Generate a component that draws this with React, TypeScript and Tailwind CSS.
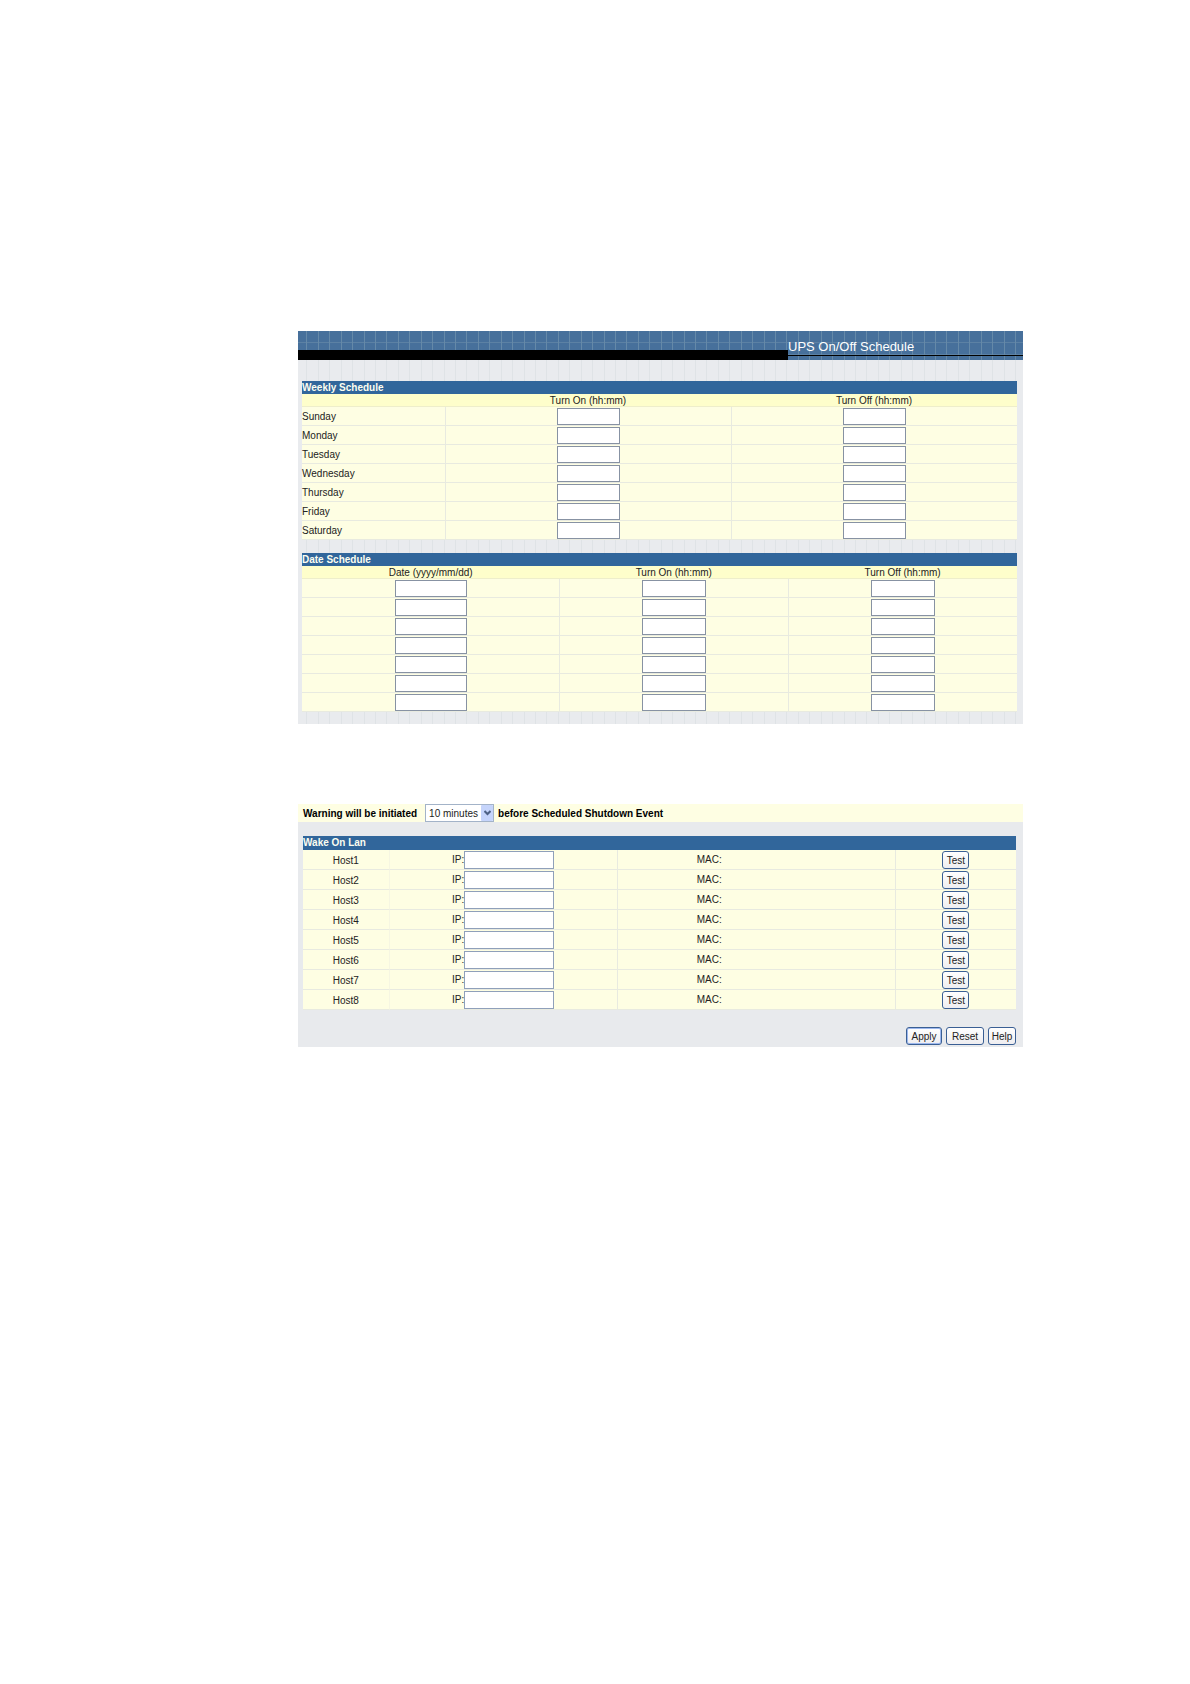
import { ReactNode } from "react";

const days = ["Sunday", "Monday", "Tuesday", "Wednesday", "Thursday", "Friday", "Saturday"];
const dateRows = [1, 2, 3, 4, 5, 6, 7];
const hosts = ["Host1", "Host2", "Host3", "Host4", "Host5", "Host6", "Host7", "Host8"];

const lineOffsets = [8, 20, 31, 43, 54, 66, 77];

function GridTexture({ id, stroke, rows }: { id: string; stroke: string; rows?: boolean }) {
  return (
    <svg aria-hidden="true" className="pointer-events-none absolute inset-0 h-full w-full">
      <defs>
        <pattern id={id} width="80" height="12" patternUnits="userSpaceOnUse">
          {lineOffsets.map((x) => (
            <rect key={x} x={x} y="0" width="1" height="12" fill={stroke} />
          ))}
          {rows && <rect x="0" y="11" width="80" height="1" fill={stroke} opacity="0.7" />}
        </pattern>
      </defs>
      <rect width="100%" height="100%" fill={`url(#${id})`} />
    </svg>
  );
}

function TitleRow({ span, className, children }: { span: number; className: string; children: ReactNode }) {
  return (
    <tr className={`bg-[#31669b] text-left text-[#fbfdf0] ${className}`}>
      <th colSpan={span} className="p-0 font-bold">
        {children}
      </th>
    </tr>
  );
}

function TextBox({ label, className }: { label: string; className: string }) {
  return (
    <input
      type="text"
      aria-label={label}
      className={`mx-auto block h-[17px] border border-[#8792a3] bg-white px-1 ${className}`}
    />
  );
}

const cell = "border-b border-l border-[#e8eae0] p-0 first:border-l-0";
const labelCell = "border-b border-[#e8eae0] p-0 pt-[2px] font-normal";
const headCell = "border-b border-[#eeeecb] p-0 pt-px font-normal leading-[11px]";
const button =
  "h-[18px] rounded-[3px] border border-[#3a5f94] bg-linear-to-b from-white to-[#eeedf0] pt-px text-center leading-[15px]";

export default function App() {
  return (
    <main className="min-h-screen bg-white pt-[331px] pr-[167px] pb-16 pl-[298px] font-['Liberation_Sans',Arial,sans-serif] text-[10px] leading-[12px] text-[#222]">
      {/* Schedule panel */}
      <section className="relative bg-[#e9ebee] pb-3">
        <GridTexture id="grid-light" stroke="#dfe3e6" />

        <header className="relative flex h-[29px] bg-[#47709b]">
          <GridTexture id="grid-blue" stroke="#6589a8" rows />
          <div className="relative mt-[19px] flex-1 bg-black" />
          <div className="relative w-[235px]">
            <div className="mt-6 h-px bg-black" />
            <h1 className="absolute top-2 left-0 text-[13px] leading-[15px] text-white">
              UPS On/Off Schedule
            </h1>
          </div>
        </header>

        <div className="relative pt-[21px] pr-[6px] pl-1">
          <table className="w-full table-fixed border-separate border-spacing-0 bg-[#fefee3]">
            <colgroup>
              <col className="w-1/5" />
              <col className="w-2/5" />
              <col className="w-2/5" />
            </colgroup>
            <thead>
              <TitleRow span={3} className="h-[13px]">
                Weekly Schedule
              </TitleRow>
              <tr className="h-[13px] bg-[#fefecb]">
                <td className={headCell} />
                <th className={headCell}>Turn On (hh:mm)</th>
                <th className={headCell}>Turn Off (hh:mm)</th>
              </tr>
            </thead>
            <tbody>
              {days.map((day) => (
                <tr key={day} className="h-[19px]">
                  <th className={`${labelCell} text-left`}>{day}</th>
                  <td className={cell}>
                    <TextBox label={`${day} turn on`} className="w-[63px]" />
                  </td>
                  <td className={cell}>
                    <TextBox label={`${day} turn off`} className="w-[63px]" />
                  </td>
                </tr>
              ))}
            </tbody>
          </table>

          <table className="mt-[13px] w-full table-fixed border-separate border-spacing-0 bg-[#fefee3]">
            <colgroup>
              <col className="w-[36%]" />
              <col className="w-[32%]" />
              <col className="w-[32%]" />
            </colgroup>
            <thead>
              <TitleRow span={3} className="h-[13px]">
                Date Schedule
              </TitleRow>
              <tr className="h-[13px] bg-[#fefecb]">
                <th className={headCell}>Date (yyyy/mm/dd)</th>
                <th className={headCell}>Turn On (hh:mm)</th>
                <th className={headCell}>Turn Off (hh:mm)</th>
              </tr>
            </thead>
            <tbody>
              {dateRows.map((n) => (
                <tr key={n} className="h-[19px]">
                  <td className={cell}>
                    <TextBox label={`Date ${n}`} className="w-[72px]" />
                  </td>
                  <td className={cell}>
                    <TextBox label={`Date ${n} turn on`} className="w-[64px]" />
                  </td>
                  <td className={cell}>
                    <TextBox label={`Date ${n} turn off`} className="w-[64px]" />
                  </td>
                </tr>
              ))}
            </tbody>
          </table>
        </div>
      </section>

      {/* Warning + wake on lan panel */}
      <section className="mt-20 bg-[#e8eaed] pb-[2px]">
        <div className="flex h-[18px] items-center bg-[#fefee3] pl-[5px] font-bold text-black">
          <label htmlFor="warning" className="pt-[2px]">
            Warning will be initiated
          </label>
          <div className="relative mr-1 ml-2 h-[18px] w-[69px]">
            <select
              id="warning"
              className="h-full w-full appearance-none border border-[#a3b3c8] bg-white pt-px pl-[3px] font-normal text-[#222]"
            >
              <option>10 minutes</option>
            </select>
            <span className="pointer-events-none absolute top-px right-px flex h-4 w-3 items-center justify-center rounded-[1px] bg-[#c5d4fb]">
              <svg width="7" height="6" viewBox="0 0 7 6" fill="none" stroke="#4d6185" strokeWidth="2">
                <path d="M0.5 1L3.5 4L6.5 1" />
              </svg>
            </span>
          </div>
          <span className="pt-[2px]">before Scheduled Shutdown Event</span>
        </div>

        <div className="pt-[14px] pr-[7px] pl-[5px]">
          <table className="w-full table-fixed border-separate border-spacing-0 bg-[#fefee3]">
            <colgroup>
              <col className="w-[12%]" />
              <col className="w-[32%]" />
              <col className="w-[39%]" />
              <col className="w-[17%]" />
            </colgroup>
            <thead>
              <TitleRow span={4} className="h-[14px]">
                Wake On Lan
              </TitleRow>
            </thead>
            <tbody>
              {hosts.map((host) => (
                <tr key={host} className="h-5">
                  <th className={`${labelCell} text-center`}>{host}</th>
                  <td className="border-b border-l border-[#e8eae0] border-l-[#f6f6e2] p-0">
                    <label className="flex items-center justify-center">
                      IP:
                      <input
                        type="text"
                        className="h-[18px] w-[90px] border border-[#8fa0ba] bg-white px-1"
                      />
                    </label>
                  </td>
                  <td className={cell}>
                    <span className="pl-[79px]">MAC:</span>
                  </td>
                  <td className={cell}>
                    <button type="button" className={`${button} mx-auto block w-[27px]`}>
                      Test
                    </button>
                  </td>
                </tr>
              ))}
            </tbody>
          </table>

          <div className="flex justify-end gap-1 pt-[17px]">
            <button type="button" className={`${button} w-9 ring-1 ring-[#9db8ee] ring-inset`}>
              Apply
            </button>
            <button type="button" className={`${button} w-[38px]`}>
              Reset
            </button>
            <button type="button" className={`${button} w-7`}>
              Help
            </button>
          </div>
        </div>
      </section>
    </main>
  );
}
